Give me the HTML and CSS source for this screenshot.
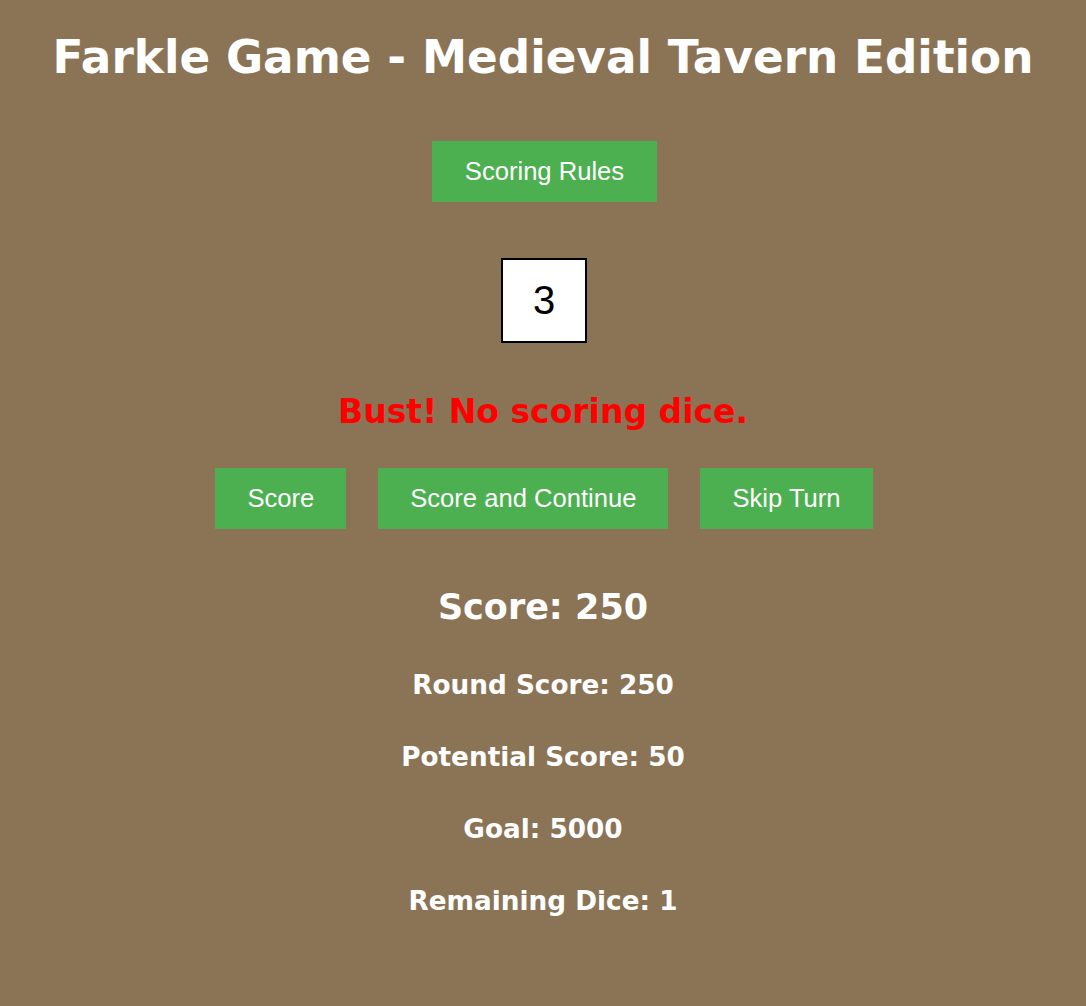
FILE: index.html
```html
<!DOCTYPE html>
<html lang="en">
<head>
<meta charset="utf-8">
<title>Farkle Game</title>
<link rel="stylesheet" href="styles.css">
</head>
<body>
<h1 class="title">Farkle Game - Medieval Tavern Edition</h1>
<div class="rules-row"><button class="btn">Scoring Rules</button></div>
<div class="dice-row"><div class="die">3</div></div>
<p class="message">Bust! No scoring dice.</p>
<div class="actions">
  <button class="btn">Score</button>
  <button class="btn">Score and Continue</button>
  <button class="btn">Skip Turn</button>
</div>
<h2 class="score">Score: 250</h2>
<p class="stat stat-first">Round Score: 250</p>
<p class="stat">Potential Score: 50</p>
<p class="stat">Goal: 5000</p>
<p class="stat">Remaining Dice: 1</p>
</body>
</html>
```

FILE: styles.css
```css
html, body {
  margin: 0;
  padding: 0;
}
body {
  background: #8b7355;
  color: #ffffff;
  font-family: "DejaVu Sans", "Liberation Sans", sans-serif;
  font-weight: bold;
  text-align: center;
  min-height: 1006px;
}
.title {
  margin: 23px 0 0;
  font-size: 45.3px;
  line-height: 70px;
  font-weight: bold;
}
.rules-row {
  margin-top: 48px;
  padding-left: 3px;
  display: flex;
  justify-content: center;
}
.btn {
  background: #4caf50;
  color: #ffffff;
  border: none;
  font-family: "Liberation Sans", Arial, sans-serif;
  font-weight: normal;
  font-size: 25.6px;
  line-height: 29px;
  padding: 16px 32px;
  cursor: pointer;
}
.rules-row .btn {
  padding: 16px 33px;
}
.dice-row {
  margin-top: 56px;
  padding-left: 2px;
  display: flex;
  justify-content: center;
}
.die {
  width: 82px;
  height: 81px;
  border: 2px solid #000000;
  background: #ffffff;
  color: #000000;
  font-family: "Liberation Sans", Arial, sans-serif;
  font-weight: normal;
  font-size: 40px;
  display: flex;
  align-items: center;
  justify-content: center;
}
.message {
  margin: 49px 0 0;
  color: #ff0000;
  font-size: 33px;
  line-height: 40px;
}
.actions {
  margin-top: 36px;
  padding-left: 2px;
  display: flex;
  justify-content: center;
  gap: 32px;
}
.score {
  margin: 58px 0 0;
  font-size: 35px;
  line-height: 40px;
}
.stat {
  margin: 36px 0 0;
  font-size: 26.3px;
  line-height: 36px;
}
.stat-first {
  margin-top: 40px;
}
```
